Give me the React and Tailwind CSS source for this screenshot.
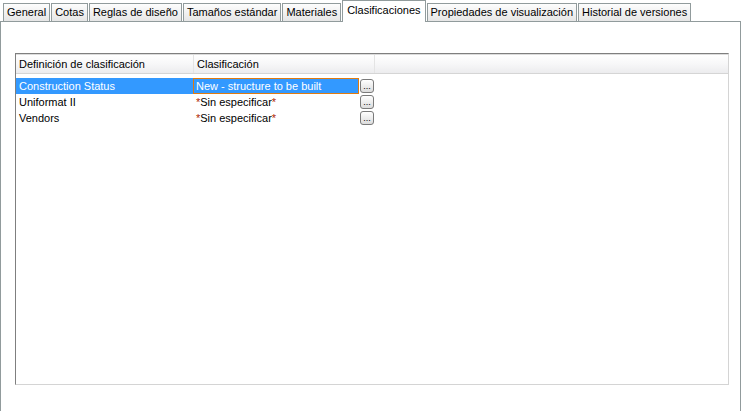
import React from "react";

const tabs = [
  "General",
  "Cotas",
  "Reglas de diseño",
  "Tamaños estándar",
  "Materiales",
  "Clasificaciones",
  "Propiedades de visualización",
  "Historial de versiones",
];

const rows = [
  { name: "Construction Status", value: "New - structure to be built", selected: true },
  { name: "Uniformat II", value: "Sin especificar", unset: true },
  { name: "Vendors", value: "Sin especificar", unset: true },
];

function DotsButton() {
  return (
    <div className="w-[14px] h-[14px] rounded-[3px] border border-[#7a7a7a] bg-gradient-to-b from-white to-[#dcdcdc] flex items-end justify-center text-[9px] leading-[9px] text-black pb-[1px]">
      ...
    </div>
  );
}

export default function App() {
  return (
    <div className="w-[742px] h-[411px] bg-white text-black text-[11px] font-['Tahoma','Liberation_Sans',sans-serif] overflow-hidden">
      {/* Tab strip */}
      <div className="flex items-end h-[21px] pl-[3px] relative z-10">
        {tabs.map((t) => {
          const active = t === "Clasificaciones";
          return (
            <div
              key={t}
              className={
                active
                  ? "h-[22px] -mb-px bg-white border border-[#919b9c] border-b-0 px-[4px] mr-px pt-[1px] leading-[16px]"
                  : "h-[18px] bg-gradient-to-b from-[#fdfdfd] to-[#e6e6e6] border border-[#919b9c] border-b-0 px-[3px] mr-px leading-[17px]"
              }
            >
              {t}
            </div>
          );
        })}
      </div>

      {/* Panel */}
      <div className="w-[741px] h-[390px] border border-[#919b9c] border-b-0 pl-[14px] pt-[31px]">
        <div className="w-[714px] h-[332px] border-t border-l border-[#7f7f7f] border-r border-b border-r-[#d4d4d4] border-b-[#d4d4d4] bg-white">
          {/* Header */}
          <div className="flex h-[20px] bg-gradient-to-b from-white via-[#f7f7f8] to-[#ececee] border-b border-[#d5d5d5] border-t border-t-[#dcdcdc]">
            <div className="w-[178px] pl-[3px] leading-[18px] border-r border-[#e4e4e4]">Definición de clasificación</div>
            <div className="w-[181px] pl-[3px] leading-[18px] border-r border-[#e4e4e4]">Clasificación</div>
            <div className="flex-1" />
          </div>

          {/* Rows */}
          <div className="pt-[4px]">
            {rows.map((r) => (
              <div key={r.name} className="flex items-center h-[16px]">
                <div
                  className={
                    r.selected
                      ? "w-[177px] h-[16px] bg-[#3399ff] text-white pl-[3px] leading-[16px]"
                      : "w-[177px] h-[16px] pl-[3px] leading-[16px]"
                  }
                >
                  {r.name}
                </div>
                <div
                  className={
                    r.selected
                      ? "w-[166px] h-[16px] bg-[#3399ff] text-white border border-[#e07b10] pl-[2px] leading-[14px]"
                      : "w-[166px] h-[16px] pl-[3px] leading-[16px]"
                  }
                >
                  {r.unset ? (
                    <>
                      <span className="text-[#b02800]">*</span>
                      {r.value}
                      <span className="text-[#b02800]">*</span>
                    </>
                  ) : (
                    r.value
                  )}
                </div>
                <div className="ml-[1px]">
                  <DotsButton />
                </div>
              </div>
            ))}
          </div>
        </div>
      </div>
    </div>
  );
}
